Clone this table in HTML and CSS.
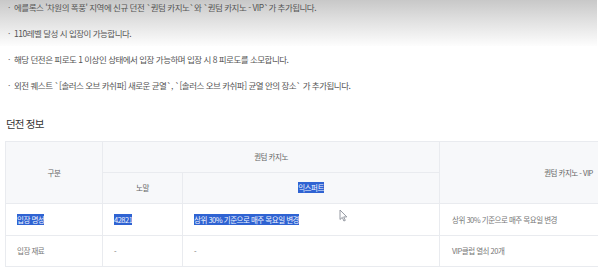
FILE: index.html
```html
<!DOCTYPE html>
<html lang="ko">
<head>
<meta charset="utf-8">
<link rel="stylesheet" href="styles.css">
</head>
<body>
<div class="frame">
  <div class="shade"></div>
  <ul class="notes">
    <li>에를록스 '차원의 폭풍' 지역에 신규 던전 `퀀텀 카지노`와 `퀀텀 카지노 - VIP`가 추가됩니다.</li>
    <li>110레벨 달성 시 입장이 가능합니다.</li>
    <li>해당 던전은 피로도 1 이상인 상태에서 입장 가능하며 입장 시 8 피로도를 소모합니다.</li>
    <li>외전 퀘스트 `[솔러스 오브 카쉬파] 새로운 균열`, `[솔러스 오브 카쉬파] 균열 안의 장소` 가 추가됩니다.</li>
  </ul>
  <h2 class="title">던전 정보</h2>
  <div class="table-wrap">
    <table class="info">
      <colgroup>
        <col class="w1"><col class="w2"><col class="w3"><col class="w4">
      </colgroup>
      <thead>
        <tr class="r1">
          <th class="hd" rowspan="2">구분</th>
          <th class="hd" colspan="2">퀀텀 카지노</th>
          <th class="hd" rowspan="2">퀀텀 카지노 - VIP</th>
        </tr>
        <tr class="r2">
          <th class="hd">노말</th>
          <th class="hd"><span class="sel">익스퍼트</span></th>
        </tr>
      </thead>
      <tbody>
        <tr class="r3">
          <td class="bd"><span class="sel">입장 명성</span></td>
          <td class="bd"><span class="sel">42821</span></td>
          <td class="bd rel"><span class="sel">상위 30% 기준으로 매주 목요일 변경</span><svg class="cursor" width="9" height="13" viewBox="0 0 9 13"><path d="M1 1 L1 10.5 L3.3 8.4 L4.9 12 L6.3 11.4 L4.7 7.9 L7.8 7.9 Z" fill="#fff" stroke="#8a8f99" stroke-width="0.9" stroke-linejoin="round"/></svg></td>
          <td class="bd last">상위 30% 기준으로 매주 목요일 변경</td>
        </tr>
        <tr class="r4">
          <td class="bd">입장 재료</td>
          <td class="bd">-</td>
          <td class="bd">-</td>
          <td class="bd last">VIP클럽 열쇠 20개</td>
        </tr>
      </tbody>
    </table>
  </div>
</div>
</body>
</html>
```

FILE: styles.css
```css
html, body {
  margin: 0;
  padding: 0;
  background: #fff;
  overflow: hidden;
}
body {
  width: 600px;
  height: 277px;
  font-family: "Noto Sans CJK KR", "Noto Sans", sans-serif;
}
.frame {
  position: relative;
  width: 598px;
  height: 277px;
  overflow: hidden;
}
.shade {
  position: absolute;
  left: 0;
  top: 0;
  width: 597px;
  height: 46px;
  background: linear-gradient(to bottom, #c8c8c8 0%, #dedede 40%, #fdfdfd 100%);
  z-index: 0;
}
.notes {
  position: relative;
  z-index: 1;
  list-style: none;
  margin: 0;
  padding: 0 0 0 8px;
  display: flex;
  flex-direction: column;
  gap: 12px;
}
.notes li {
  font-size: 8.5px;
  line-height: 14px;
  letter-spacing: -0.5px;
  color: #555;
  white-space: nowrap;
}
.notes li::before {
  content: "·";
  display: inline-block;
  width: 6px;
  color: #666;
}
.title {
  margin: 24px 0 0 6px;
  font-size: 10.5px;
  line-height: 16px;
  font-weight: 400;
  letter-spacing: -0.8px;
  color: #333;
}
.table-wrap {
  margin: 9px 0 0 5px;
  width: 593px;
  overflow: hidden;
}
.info {
  border-collapse: collapse;
  table-layout: fixed;
  width: 692px;
  font-size: 7.5px;
  letter-spacing: -0.5px;
  color: #666;
}
.w1 { width: 97px; }
.w2 { width: 80px; }
.w3 { width: 257px; }
.w4 { width: 258px; }
.hd, .bd {
  border: 1px solid #e9ebef;
  padding: 0;
  line-height: 12px;
  white-space: nowrap;
}
.hd {
  background-color: #f7f8fa;
  font-weight: 400;
  text-align: center;
  color: #666;
}
.bd {
  background-color: #fff;
  text-align: left;
  padding-left: 11px;
  color: #777;
}
.bd.last { padding-left: 12px; }
.r1, .r2, .r4 { height: 31px; }
.r3 { height: 32px; }
.sel {
  background-color: #2f63d2;
  color: #f2f5ff;
}
.rel { position: relative; }
.cursor {
  position: absolute;
  left: 156px;
  top: 5px;
}
```
